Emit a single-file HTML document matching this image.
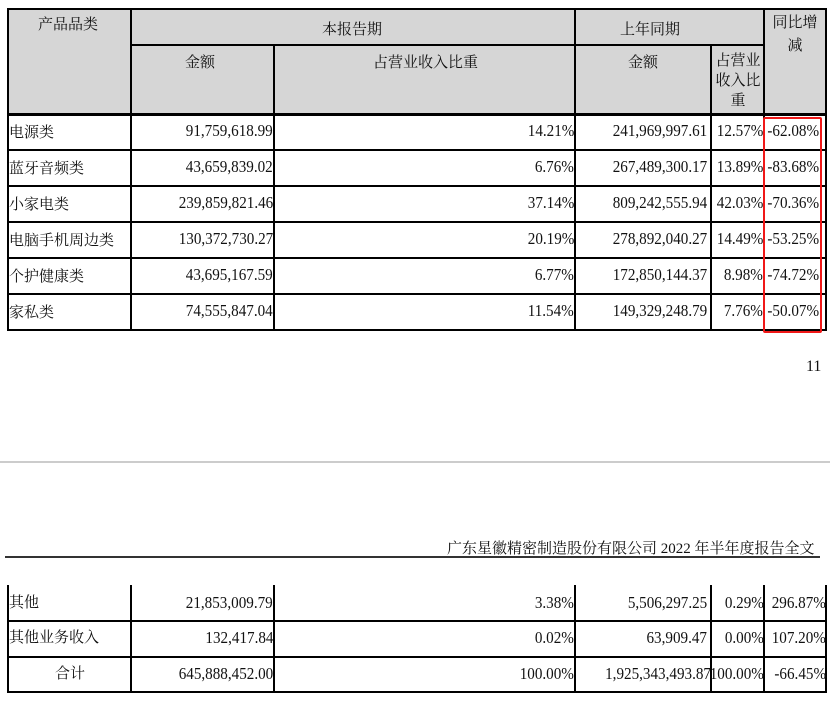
<!DOCTYPE html>
<html><head><meta charset="utf-8"><style>
body{margin:0;width:830px;height:704px;background:#fff;position:relative;overflow:hidden;font-family:"Liberation Serif","Noto Serif CJK SC",serif;color:#111}
.h{position:absolute;background:#000}
.v{position:absolute;background:#000;width:2px}
.g{position:absolute;background:#d6d6d6}
.t{position:absolute;white-space:nowrap}
.c{font-size:15px}
.n{font-size:17px;text-align:right;transform:scaleX(0.89);transform-origin:right center}
</style></head><body>
<div class="g" style="left:8px;top:9px;width:818px;height:105px"></div>
<div class="h" style="left:7px;top:8px;width:820px;height:2px"></div>
<div class="h" style="left:130px;top:44px;width:634px;height:2px"></div>
<div class="h" style="left:7px;top:113px;width:820px;height:3px"></div>
<div class="h" style="left:7px;top:149px;width:820px;height:2px"></div>
<div class="h" style="left:7px;top:185px;width:820px;height:2px"></div>
<div class="h" style="left:7px;top:221px;width:820px;height:2px"></div>
<div class="h" style="left:7px;top:257px;width:820px;height:2px"></div>
<div class="h" style="left:7px;top:293px;width:820px;height:2px"></div>
<div class="h" style="left:7px;top:329px;width:820px;height:2px"></div>
<div class="v" style="left:7px;top:8px;height:323px"></div>
<div class="v" style="left:130px;top:8px;height:323px"></div>
<div class="v" style="left:273px;top:44px;height:287px"></div>
<div class="v" style="left:574px;top:8px;height:323px"></div>
<div class="v" style="left:710px;top:44px;height:287px"></div>
<div class="v" style="left:763px;top:8px;height:323px"></div>
<div class="v" style="left:825px;top:8px;height:323px"></div>
<div style="position:absolute;left:763px;top:117px;width:55px;height:212px;border:2px solid #f01818;border-radius:2px"></div>
<div class="t c" style="left:38px;top:13px">产品品类</div>
<div class="t c" style="left:322px;top:18px">本报告期</div>
<div class="t c" style="left:620px;top:18px">上年同期</div>
<div class="t c" style="left:768px;top:12px;line-height:23px;text-align:center;width:54px;white-space:normal">同比增<br>减</div>
<div class="t c" style="left:185px;top:51px">金额</div>
<div class="t c" style="left:373px;top:51px">占营业收入比重</div>
<div class="t c" style="left:628px;top:51px">金额</div>
<div class="t c" style="left:712px;top:51px;width:52px;text-align:center;line-height:20px;white-space:normal">占营业<br>收入比<br>重</div>

<div class="t c" style="left:9px;top:121px">电源类</div>
<div class="t c" style="left:9px;top:157px">蓝牙音频类</div>
<div class="t c" style="left:9px;top:193px">小家电类</div>
<div class="t c" style="left:9px;top:229px">电脑手机周边类</div>
<div class="t c" style="left:9px;top:265px">个护健康类</div>
<div class="t c" style="left:9px;top:301px">家私类</div>

<div class="t n" style="right:557px;top:121px">91,759,618.99</div>
<div class="t n" style="right:557px;top:157px">43,659,839.02</div>
<div class="t n" style="right:557px;top:193px">239,859,821.46</div>
<div class="t n" style="right:557px;top:229px">130,372,730.27</div>
<div class="t n" style="right:557px;top:265px">43,695,167.59</div>
<div class="t n" style="right:557px;top:301px">74,555,847.04</div>

<div class="t n" style="right:256px;top:121px">14.21%</div>
<div class="t n" style="right:256px;top:157px">6.76%</div>
<div class="t n" style="right:256px;top:193px">37.14%</div>
<div class="t n" style="right:256px;top:229px">20.19%</div>
<div class="t n" style="right:256px;top:265px">6.77%</div>
<div class="t n" style="right:256px;top:301px">11.54%</div>

<div class="t n" style="right:123px;top:121px">241,969,997.61</div>
<div class="t n" style="right:123px;top:157px">267,489,300.17</div>
<div class="t n" style="right:123px;top:193px">809,242,555.94</div>
<div class="t n" style="right:123px;top:229px">278,892,040.27</div>
<div class="t n" style="right:123px;top:265px">172,850,144.37</div>
<div class="t n" style="right:123px;top:301px">149,329,248.79</div>

<div class="t n" style="right:67px;top:121px">12.57%</div>
<div class="t n" style="right:67px;top:157px">13.89%</div>
<div class="t n" style="right:67px;top:193px">42.03%</div>
<div class="t n" style="right:67px;top:229px">14.49%</div>
<div class="t n" style="right:67px;top:265px">8.98%</div>
<div class="t n" style="right:67px;top:301px">7.76%</div>

<div class="t n" style="right:11px;top:121px">-62.08%</div>
<div class="t n" style="right:11px;top:157px">-83.68%</div>
<div class="t n" style="right:11px;top:193px">-70.36%</div>
<div class="t n" style="right:11px;top:229px">-53.25%</div>
<div class="t n" style="right:11px;top:265px">-74.72%</div>
<div class="t n" style="right:11px;top:301px">-50.07%</div>

<div class="t" style="left:806px;top:358px;font-size:16px">11</div>
<div style="position:absolute;left:0;top:461px;width:830px;height:2px;background:#ccc"></div>

<div class="t" style="left:447px;top:537px;font-size:15px">广东星徽精密制造股份有限公司 2022 年半年度报告全文</div>
<div class="h" style="left:5px;top:556px;width:815px;height:2px;background:#333"></div>

<div class="v" style="left:7px;top:585px;height:108px"></div>
<div class="v" style="left:130px;top:585px;height:108px"></div>
<div class="v" style="left:273px;top:585px;height:108px"></div>
<div class="v" style="left:574px;top:585px;height:108px"></div>
<div class="v" style="left:710px;top:585px;height:108px"></div>
<div class="v" style="left:763px;top:585px;height:108px"></div>
<div class="v" style="left:825px;top:585px;height:108px"></div>
<div class="h" style="left:7px;top:620px;width:820px;height:2px"></div>
<div class="h" style="left:7px;top:656px;width:820px;height:2px"></div>
<div class="h" style="left:7px;top:691px;width:820px;height:2px"></div>

<div class="t c" style="left:9px;top:591px">其他</div>
<div class="t c" style="left:9px;top:626px">其他业务收入</div>
<div class="t c" style="left:55px;top:662px">合计</div>
<div class="t n" style="right:557px;top:593px">21,853,009.79</div>
<div class="t n" style="right:557px;top:628px">132,417.84</div>
<div class="t n" style="right:557px;top:664px">645,888,452.00</div>
<div class="t n" style="right:256px;top:593px">3.38%</div>
<div class="t n" style="right:256px;top:628px">0.02%</div>
<div class="t n" style="right:256px;top:664px">100.00%</div>
<div class="t n" style="right:123px;top:593px">5,506,297.25</div>
<div class="t n" style="right:123px;top:628px">63,909.47</div>
<div class="t n" style="right:119px;top:664px">1,925,343,493.87</div>
<div class="t n" style="right:66px;top:593px">0.29%</div>
<div class="t n" style="right:66px;top:628px">0.00%</div>
<div class="t n" style="right:66px;top:664px">100.00%</div>
<div class="t n" style="right:4px;top:593px">296.87%</div>
<div class="t n" style="right:4px;top:628px">107.20%</div>
<div class="t n" style="right:4px;top:664px">-66.45%</div>
</body></html>
